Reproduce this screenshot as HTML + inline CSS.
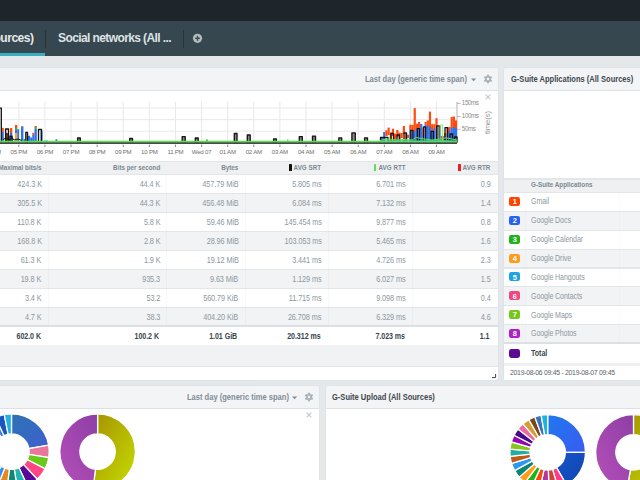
<!DOCTYPE html>
<html><head><meta charset="utf-8"><style>
html,body{margin:0;padding:0;width:640px;height:480px;overflow:hidden;background:#e5e8eb;font-family:"Liberation Sans", sans-serif;}
</style></head><body>
<div style="position:absolute;left:0px;top:0px;width:640px;height:21px;background:#1e252b;"></div><div style="position:absolute;left:0px;top:21px;width:640px;height:34.5px;background:#37474f;"></div><div style="position:absolute;left:0px;top:53px;width:45.3px;height:2.6px;background:#3cacbf;"></div><div style="position:absolute;left:45px;top:30px;width:1px;height:18px;background:#26323a;"></div><div style="position:absolute;left:183px;top:30px;width:1px;height:18px;background:#28343b;"></div><div style="position:absolute;top:31.44px;height:15.6px;line-height:15.6px;font-size:12px;font-weight:700;color:#e6eaec;white-space:nowrap;letter-spacing:-0.45px;right:606.4px;">ources)</div><div style="position:absolute;top:31.44px;height:15.6px;line-height:15.6px;font-size:12px;font-weight:700;color:#dde2e5;white-space:nowrap;letter-spacing:-0.6px;left:58px;">Social networks (All ...</div><svg style="position:absolute;left:192px;top:33px" width="11" height="11" viewBox="0 0 11 11"><circle cx="5.5" cy="5.3" r="4.6" fill="#b3bbbf"/><rect x="3" y="4.65" width="5" height="1.3" fill="#37474f"/><rect x="4.85" y="2.8" width="1.3" height="5" fill="#37474f"/></svg><div style="position:absolute;left:-10px;top:67.5px;width:508px;height:312px;background:#fff;border-radius:3px;box-shadow:0 0 0 0.7px #dde2e6;overflow:hidden"></div><div style="position:absolute;left:504px;top:67.5px;width:150px;height:312px;background:#fff;border-radius:3px;box-shadow:0 0 0 0.7px #dde2e6;overflow:hidden"></div><div style="position:absolute;left:-10px;top:385.6px;width:329px;height:120px;background:#fff;border-radius:3px;box-shadow:0 0 0 0.7px #dde2e6;overflow:hidden"></div><div style="position:absolute;left:326px;top:385.6px;width:330px;height:120px;background:#fff;border-radius:3px;box-shadow:0 0 0 0.7px #dde2e6;overflow:hidden"></div><div style="position:absolute;left:-10px;top:67.5px;width:508px;height:23.6px;background:#f3f4f6;border-radius:3px 3px 0 0;border-bottom:1px solid #dce1e5;box-sizing:border-box"></div><div style="position:absolute;left:504px;top:67.5px;width:150px;height:23.6px;background:#f3f4f6;border-radius:3px 3px 0 0;border-bottom:1px solid #dce1e5;box-sizing:border-box"></div><div style="position:absolute;left:-10px;top:385.6px;width:329px;height:23.3px;background:#f3f4f6;border-radius:3px 3px 0 0;border-bottom:1px solid #dce1e5;box-sizing:border-box"></div><div style="position:absolute;left:326px;top:385.6px;width:330px;height:23.3px;background:#f3f4f6;border-radius:3px 3px 0 0;border-bottom:1px solid #dce1e5;box-sizing:border-box"></div><div style="position:absolute;top:73.93px;height:11.31px;line-height:11.31px;font-size:8.7px;font-weight:700;color:#7f8d96;white-space:nowrap;letter-spacing:0px;left:365.3px;transform:scaleX(0.869);transform-origin:left center;">Last day (generic time span)</div><svg style="position:absolute;left:470.5px;top:77.7px" width="6" height="4" viewBox="0 0 6 4"><path d="M0 0.5 L5.2 0.5 L2.6 3.3 Z" fill="#7f8d96"/></svg><svg style="position:absolute;left:482px;top:73.2px" width="12" height="12" viewBox="-6 -6 12 12"><rect x="-1.05" y="-4.3" width="2.1" height="2.2" fill="#aab3b9" transform="rotate(0)"/><rect x="-1.05" y="-4.3" width="2.1" height="2.2" fill="#aab3b9" transform="rotate(60)"/><rect x="-1.05" y="-4.3" width="2.1" height="2.2" fill="#aab3b9" transform="rotate(120)"/><rect x="-1.05" y="-4.3" width="2.1" height="2.2" fill="#aab3b9" transform="rotate(180)"/><rect x="-1.05" y="-4.3" width="2.1" height="2.2" fill="#aab3b9" transform="rotate(240)"/><rect x="-1.05" y="-4.3" width="2.1" height="2.2" fill="#aab3b9" transform="rotate(300)"/><circle cx="0" cy="0" r="3.1" fill="#aab3b9"/><circle cx="0" cy="0" r="1.25" fill="#f3f4f6"/></svg><div style="position:absolute;top:73.83px;height:11.96px;line-height:11.96px;font-size:9.2px;font-weight:700;color:#40474d;white-space:nowrap;letter-spacing:0px;left:511.1px;transform:scaleX(0.819);transform-origin:left center;">G-Suite Applications (All Sources)</div><div style="position:absolute;top:392.33px;height:11.31px;line-height:11.31px;font-size:8.7px;font-weight:700;color:#7f8d96;white-space:nowrap;letter-spacing:0px;left:187.0px;transform:scaleX(0.869);transform-origin:left center;">Last day (generic time span)</div><svg style="position:absolute;left:291.5px;top:396px" width="6" height="4" viewBox="0 0 6 4"><path d="M0 0.5 L5.2 0.5 L2.6 3.3 Z" fill="#7f8d96"/></svg><svg style="position:absolute;left:303px;top:391.3px" width="12" height="12" viewBox="-6 -6 12 12"><rect x="-1.05" y="-4.3" width="2.1" height="2.2" fill="#aab3b9" transform="rotate(0)"/><rect x="-1.05" y="-4.3" width="2.1" height="2.2" fill="#aab3b9" transform="rotate(60)"/><rect x="-1.05" y="-4.3" width="2.1" height="2.2" fill="#aab3b9" transform="rotate(120)"/><rect x="-1.05" y="-4.3" width="2.1" height="2.2" fill="#aab3b9" transform="rotate(180)"/><rect x="-1.05" y="-4.3" width="2.1" height="2.2" fill="#aab3b9" transform="rotate(240)"/><rect x="-1.05" y="-4.3" width="2.1" height="2.2" fill="#aab3b9" transform="rotate(300)"/><circle cx="0" cy="0" r="3.1" fill="#aab3b9"/><circle cx="0" cy="0" r="1.25" fill="#f3f4f6"/></svg><svg style="position:absolute;left:305.4px;top:410.8px" width="8" height="8" viewBox="0 0 8 8"><path d="M1.6 1.6 L6.4 6.4 M6.4 1.6 L1.6 6.4" stroke="#c4cacf" stroke-width="1.2"/></svg><div style="position:absolute;top:392.13px;height:11.96px;line-height:11.96px;font-size:9.2px;font-weight:700;color:#40474d;white-space:nowrap;letter-spacing:0px;left:332.4px;transform:scaleX(0.819);transform-origin:left center;">G-Suite Upload (All Sources)</div><svg style="position:absolute;left:0;top:90px" width="498" height="71" viewBox="0 90 498 71"><line x1="18.80" y1="101.8" x2="18.80" y2="142.5" stroke="#e8e8e8" stroke-width="1"/><line x1="18.80" y1="144.6" x2="18.80" y2="147" stroke="#888" stroke-width="1"/><line x1="44.91" y1="101.8" x2="44.91" y2="142.5" stroke="#e8e8e8" stroke-width="1"/><line x1="44.91" y1="144.6" x2="44.91" y2="147" stroke="#888" stroke-width="1"/><line x1="71.02" y1="101.8" x2="71.02" y2="142.5" stroke="#e8e8e8" stroke-width="1"/><line x1="71.02" y1="144.6" x2="71.02" y2="147" stroke="#888" stroke-width="1"/><line x1="97.13" y1="101.8" x2="97.13" y2="142.5" stroke="#e8e8e8" stroke-width="1"/><line x1="97.13" y1="144.6" x2="97.13" y2="147" stroke="#888" stroke-width="1"/><line x1="123.24" y1="101.8" x2="123.24" y2="142.5" stroke="#e8e8e8" stroke-width="1"/><line x1="123.24" y1="144.6" x2="123.24" y2="147" stroke="#888" stroke-width="1"/><line x1="149.35" y1="101.8" x2="149.35" y2="142.5" stroke="#e8e8e8" stroke-width="1"/><line x1="149.35" y1="144.6" x2="149.35" y2="147" stroke="#888" stroke-width="1"/><line x1="175.46" y1="101.8" x2="175.46" y2="142.5" stroke="#e8e8e8" stroke-width="1"/><line x1="175.46" y1="144.6" x2="175.46" y2="147" stroke="#888" stroke-width="1"/><line x1="201.57" y1="101.8" x2="201.57" y2="142.5" stroke="#e8e8e8" stroke-width="1"/><line x1="201.57" y1="144.6" x2="201.57" y2="147" stroke="#888" stroke-width="1"/><line x1="227.68" y1="101.8" x2="227.68" y2="142.5" stroke="#e8e8e8" stroke-width="1"/><line x1="227.68" y1="144.6" x2="227.68" y2="147" stroke="#888" stroke-width="1"/><line x1="253.79" y1="101.8" x2="253.79" y2="142.5" stroke="#e8e8e8" stroke-width="1"/><line x1="253.79" y1="144.6" x2="253.79" y2="147" stroke="#888" stroke-width="1"/><line x1="279.90" y1="101.8" x2="279.90" y2="142.5" stroke="#e8e8e8" stroke-width="1"/><line x1="279.90" y1="144.6" x2="279.90" y2="147" stroke="#888" stroke-width="1"/><line x1="306.01" y1="101.8" x2="306.01" y2="142.5" stroke="#e8e8e8" stroke-width="1"/><line x1="306.01" y1="144.6" x2="306.01" y2="147" stroke="#888" stroke-width="1"/><line x1="332.12" y1="101.8" x2="332.12" y2="142.5" stroke="#e8e8e8" stroke-width="1"/><line x1="332.12" y1="144.6" x2="332.12" y2="147" stroke="#888" stroke-width="1"/><line x1="358.23" y1="101.8" x2="358.23" y2="142.5" stroke="#e8e8e8" stroke-width="1"/><line x1="358.23" y1="144.6" x2="358.23" y2="147" stroke="#888" stroke-width="1"/><line x1="384.34" y1="101.8" x2="384.34" y2="142.5" stroke="#e8e8e8" stroke-width="1"/><line x1="384.34" y1="144.6" x2="384.34" y2="147" stroke="#888" stroke-width="1"/><line x1="410.45" y1="101.8" x2="410.45" y2="142.5" stroke="#e8e8e8" stroke-width="1"/><line x1="410.45" y1="144.6" x2="410.45" y2="147" stroke="#888" stroke-width="1"/><line x1="436.56" y1="101.8" x2="436.56" y2="142.5" stroke="#e8e8e8" stroke-width="1"/><line x1="436.56" y1="144.6" x2="436.56" y2="147" stroke="#888" stroke-width="1"/><line x1="0" y1="108.0" x2="457" y2="108.0" stroke="#e9e9e9" stroke-width="1"/><line x1="0" y1="119.6" x2="457" y2="119.6" stroke="#e9e9e9" stroke-width="1"/><line x1="0" y1="131.2" x2="457" y2="131.2" stroke="#e9e9e9" stroke-width="1"/><line x1="457" y1="101.8" x2="457" y2="143" stroke="#b5b5b5" stroke-width="1"/><line x1="457" y1="103.4" x2="460.5" y2="103.4" stroke="#aaa" stroke-width="0.8"/><line x1="457" y1="116.5" x2="460.5" y2="116.5" stroke="#aaa" stroke-width="0.8"/><line x1="457" y1="129.3" x2="460.5" y2="129.3" stroke="#aaa" stroke-width="0.8"/><rect x="2.00" y="127.90" width="1.80" height="3.80" fill="#ff4b0d"/><rect x="2.00" y="131.70" width="1.80" height="9.30" fill="#2f72e9"/><rect x="6.00" y="133.00" width="2.30" height="8.00" fill="#80360f"/><rect x="10.00" y="128.00" width="2.30" height="5.00" fill="#ff4b0d"/><rect x="10.00" y="133.00" width="2.30" height="8.00" fill="#2f72e9"/><rect x="15.00" y="125.00" width="2.30" height="3.00" fill="#ff4b0d"/><rect x="15.00" y="128.00" width="2.30" height="2.00" fill="#3db43d"/><rect x="15.00" y="130.00" width="2.30" height="3.00" fill="#2f72e9"/><rect x="15.00" y="133.00" width="2.30" height="8.00" fill="#f7a12b"/><rect x="17.30" y="129.00" width="1.80" height="0.60" fill="#ff4b0d"/><rect x="17.30" y="129.60" width="1.80" height="11.40" fill="#2f72e9"/><rect x="21.00" y="126.00" width="2.40" height="0.60" fill="#ff4b0d"/><rect x="21.00" y="126.60" width="2.40" height="14.40" fill="#2f72e9"/><rect x="23.50" y="139.00" width="1.60" height="2.00" fill="#2f72e9"/><rect x="28.00" y="135.80" width="2.20" height="5.20" fill="#2f72e9"/><rect x="30.20" y="137.50" width="2.20" height="3.50" fill="#2f72e9"/><rect x="32.30" y="132.80" width="2.20" height="2.20" fill="#ff4b0d"/><rect x="32.30" y="135.00" width="2.20" height="6.00" fill="#2f72e9"/><rect x="34.50" y="126.00" width="2.30" height="1.00" fill="#ff4b0d"/><rect x="34.50" y="127.00" width="2.30" height="2.00" fill="#3db43d"/><rect x="34.50" y="129.00" width="2.30" height="12.00" fill="#2f72e9"/><rect x="40.50" y="130.50" width="2.00" height="1.50" fill="#3db43d"/><rect x="40.50" y="132.00" width="2.00" height="9.00" fill="#2f72e9"/><rect x="44.00" y="140.00" width="4.00" height="1.00" fill="#9cc8f0"/><rect x="55.50" y="139.30" width="1.80" height="1.70" fill="#2f72e9"/><rect x="206.00" y="139.50" width="1.80" height="1.50" fill="#3db43d"/><rect x="287.00" y="139.50" width="1.50" height="1.50" fill="#8ab4f0"/><rect x="381.00" y="138.00" width="2.20" height="3.00" fill="#2f72e9"/><rect x="383.18" y="132.00" width="2.20" height="9.00" fill="#2f72e9"/><rect x="385.35" y="130.30" width="2.20" height="5.70" fill="#ff4b0d"/><rect x="387.53" y="127.60" width="2.20" height="7.40" fill="#ff4b0d"/><rect x="389.70" y="132.50" width="2.20" height="8.50" fill="#ff4b0d"/><rect x="391.88" y="128.70" width="2.20" height="7.30" fill="#ff4b0d"/><rect x="394.06" y="133.60" width="2.20" height="7.40" fill="#ff4b0d"/><rect x="396.23" y="130.00" width="2.20" height="7.00" fill="#ff4b0d"/><rect x="398.41" y="132.50" width="2.20" height="8.50" fill="#ff4b0d"/><rect x="400.58" y="133.00" width="2.20" height="5.00" fill="#ff4b0d"/><rect x="402.76" y="126.00" width="2.20" height="8.00" fill="#ff4b0d"/><rect x="404.94" y="133.60" width="2.20" height="7.40" fill="#ff4b0d"/><rect x="407.11" y="134.70" width="2.20" height="3.30" fill="#ff4b0d"/><rect x="409.29" y="124.80" width="2.20" height="5.20" fill="#ff4b0d"/><rect x="409.29" y="130.00" width="2.20" height="11.00" fill="#2f72e9"/><rect x="411.46" y="124.80" width="2.20" height="8.20" fill="#ff4b0d"/><rect x="411.46" y="133.00" width="2.20" height="8.00" fill="#2f72e9"/><rect x="413.64" y="108.20" width="2.20" height="22.80" fill="#ff4b0d"/><rect x="413.64" y="131.00" width="2.20" height="10.00" fill="#2f72e9"/><rect x="415.82" y="123.70" width="2.20" height="4.30" fill="#ff4b0d"/><rect x="415.82" y="128.00" width="2.20" height="13.00" fill="#2f72e9"/><rect x="417.99" y="122.00" width="2.20" height="8.00" fill="#ff4b0d"/><rect x="417.99" y="130.00" width="2.20" height="11.00" fill="#2f72e9"/><rect x="420.17" y="124.00" width="2.20" height="17.00" fill="#2f72e9"/><rect x="422.34" y="128.00" width="2.20" height="7.00" fill="#ff4b0d"/><rect x="422.34" y="135.00" width="2.20" height="6.00" fill="#2f72e9"/><rect x="424.52" y="122.00" width="2.20" height="2.50" fill="#ff4b0d"/><rect x="424.52" y="124.50" width="2.20" height="16.50" fill="#2f72e9"/><rect x="426.70" y="120.40" width="2.20" height="5.60" fill="#ff4b0d"/><rect x="426.70" y="126.00" width="2.20" height="15.00" fill="#2f72e9"/><rect x="428.87" y="111.60" width="2.20" height="15.40" fill="#ff4b0d"/><rect x="428.87" y="127.00" width="2.20" height="14.00" fill="#2f72e9"/><rect x="431.05" y="124.20" width="2.20" height="7.80" fill="#ff4b0d"/><rect x="431.05" y="132.00" width="2.20" height="9.00" fill="#2f72e9"/><rect x="433.22" y="124.20" width="2.20" height="3.80" fill="#ff4b0d"/><rect x="433.22" y="128.00" width="2.20" height="13.00" fill="#2f72e9"/><rect x="435.40" y="118.20" width="2.20" height="12.80" fill="#ff4b0d"/><rect x="435.40" y="131.00" width="2.20" height="10.00" fill="#2f72e9"/><rect x="437.58" y="133.00" width="2.20" height="8.00" fill="#2f72e9"/><rect x="439.75" y="136.00" width="2.20" height="5.00" fill="#2f72e9"/><rect x="441.93" y="136.00" width="2.20" height="5.00" fill="#ff4b0d"/><rect x="444.10" y="133.00" width="2.20" height="4.00" fill="#ff4b0d"/><rect x="444.10" y="137.00" width="2.20" height="4.00" fill="#2f72e9"/><rect x="446.28" y="127.60" width="2.20" height="6.40" fill="#ff4b0d"/><rect x="446.28" y="134.00" width="2.20" height="7.00" fill="#2f72e9"/><rect x="448.46" y="127.00" width="2.20" height="4.00" fill="#ff4b0d"/><rect x="448.46" y="131.00" width="2.20" height="10.00" fill="#2f72e9"/><rect x="450.63" y="117.00" width="2.20" height="11.00" fill="#ff4b0d"/><rect x="450.63" y="128.00" width="2.20" height="13.00" fill="#2f72e9"/><rect x="452.81" y="116.50" width="2.20" height="10.50" fill="#ff4b0d"/><rect x="452.81" y="127.00" width="2.20" height="14.00" fill="#2f72e9"/><rect x="454.98" y="120.40" width="2.02" height="7.60" fill="#ff4b0d"/><rect x="454.98" y="128.00" width="2.02" height="13.00" fill="#2f72e9"/><path d="M5.60 142.5 V129.00 H8.50 V142.5" fill="none" stroke="#151515" stroke-width="1.35" stroke-linejoin="round"/><path d="M9.90 142.5 V136.20 H12.10 V142.5" fill="none" stroke="#151515" stroke-width="1.35" stroke-linejoin="round"/><path d="M25.80 142.5 V132.30 H27.50 V142.5" fill="none" stroke="#151515" stroke-width="1.35" stroke-linejoin="round"/><path d="M38.50 142.5 V129.50 H41.50 V142.5" fill="none" stroke="#151515" stroke-width="1.35" stroke-linejoin="round"/><path d="M77.60 142.5 V138.00 H80.30 V142.5" fill="#8a8a8a" stroke="#151515" stroke-width="1.35" stroke-linejoin="round"/><path d="M129.70 142.5 V138.50 H132.50 V142.5" fill="#8a8a8a" stroke="#151515" stroke-width="1.35" stroke-linejoin="round"/><path d="M182.20 142.5 V136.60 H185.20 V142.5" fill="#8a8a8a" stroke="#151515" stroke-width="1.35" stroke-linejoin="round"/><path d="M195.30 142.5 V138.00 H198.20 V142.5" fill="#8a8a8a" stroke="#151515" stroke-width="1.35" stroke-linejoin="round"/><path d="M234.30 142.5 V133.50 H237.00 V142.5" fill="#8a8a8a" stroke="#151515" stroke-width="1.35" stroke-linejoin="round"/><path d="M247.30 142.5 V135.00 H250.20 V142.5" fill="#8a8a8a" stroke="#151515" stroke-width="1.35" stroke-linejoin="round"/><path d="M273.60 142.5 V138.80 H276.30 V142.5" fill="#8a8a8a" stroke="#151515" stroke-width="1.35" stroke-linejoin="round"/><path d="M299.30 142.5 V136.60 H302.30 V142.5" fill="#8a8a8a" stroke="#151515" stroke-width="1.35" stroke-linejoin="round"/><path d="M312.50 142.5 V136.10 H315.50 V142.5" fill="#8a8a8a" stroke="#151515" stroke-width="1.35" stroke-linejoin="round"/><path d="M338.80 142.5 V137.90 H341.70 V142.5" fill="#8a8a8a" stroke="#151515" stroke-width="1.35" stroke-linejoin="round"/><path d="M351.90 142.5 V132.90 H355.30 V142.5" fill="#8a8a8a" stroke="#151515" stroke-width="1.35" stroke-linejoin="round"/><path d="M364.60 142.5 V137.90 H367.50 V142.5" fill="#8a8a8a" stroke="#151515" stroke-width="1.35" stroke-linejoin="round"/><path d="M1.3 142.5 V108.2 H-2" fill="none" stroke="#111" stroke-width="1.3"/><path d="M380.50 142.5 V137.50 H388.00 V142.5" fill="none" stroke="#151515" stroke-width="1.3" stroke-linejoin="round"/><path d="M391.00 142.5 V133.50 H393.50 V142.5" fill="none" stroke="#151515" stroke-width="1.3" stroke-linejoin="round"/><path d="M397.00 142.5 V135.00 H399.50 V142.5" fill="none" stroke="#151515" stroke-width="1.3" stroke-linejoin="round"/><path d="M404.00 142.5 V133.00 H406.50 V142.5" fill="none" stroke="#151515" stroke-width="1.3" stroke-linejoin="round"/><path d="M410.80 142.5 V130.30 H413.00 V142.5" fill="none" stroke="#151515" stroke-width="1.3" stroke-linejoin="round"/><path d="M417.40 142.5 V128.70 H419.60 V142.5" fill="none" stroke="#151515" stroke-width="1.3" stroke-linejoin="round"/><path d="M423.50 142.5 V127.00 H425.70 V142.5" fill="none" stroke="#151515" stroke-width="1.3" stroke-linejoin="round"/><path d="M431.00 142.5 V131.40 H433.40 V142.5" fill="none" stroke="#151515" stroke-width="1.3" stroke-linejoin="round"/><path d="M436.70 142.5 V125.90 H440.00 V142.5" fill="#8a8a8a" stroke="#151515" stroke-width="1.3" stroke-linejoin="round"/><path d="M445.00 142.5 V127.60 H447.70 V142.5" fill="none" stroke="#151515" stroke-width="1.3" stroke-linejoin="round"/><path d="M450.00 142.5 V134.00 H452.50 V142.5" fill="none" stroke="#151515" stroke-width="1.3" stroke-linejoin="round"/><path d="M454.50 142.5 V137.00 H457.00 V142.5" fill="none" stroke="#151515" stroke-width="1.3" stroke-linejoin="round"/><path d="M3 139.5 L6 138 L9 140 L12 137.5 L14 140 L18 139 L22 140.5" fill="none" stroke="#111" stroke-width="1"/><path d="M440.2 141 V125 H442.6 V141" fill="none" stroke="#7ef07e" stroke-width="1"/><path d="M380 140.5 L388 139 L396 140 L404 139.5 L412 140 L416 137.5 L424 139 L432 140 L440 139 L446 137.8 L452 139 L457 140" fill="none" stroke="#5ee05e" stroke-width="1"/><path d="M384 141 L400 140.5 L420 141 L440 140.5 L457 141" fill="none" stroke="#35c9c9" stroke-width="0.8"/><rect x="0" y="142.2" width="457" height="1.7" fill="#2e3a30"/><rect x="0" y="140.75" width="457" height="1.5" fill="#55e04a"/></svg><div style="position:absolute;top:147.62px;height:7.93px;line-height:7.93px;font-size:6.1px;font-weight:400;color:#6f6f6f;white-space:nowrap;letter-spacing:-0.22px;left:-107.31px;width:200px;text-align:center;">04 PM</div><div style="position:absolute;top:147.62px;height:7.93px;line-height:7.93px;font-size:6.1px;font-weight:400;color:#6f6f6f;white-space:nowrap;letter-spacing:-0.22px;left:-81.2px;width:200px;text-align:center;">05 PM</div><div style="position:absolute;top:147.62px;height:7.93px;line-height:7.93px;font-size:6.1px;font-weight:400;color:#6f6f6f;white-space:nowrap;letter-spacing:-0.22px;left:-55.09px;width:200px;text-align:center;">06 PM</div><div style="position:absolute;top:147.62px;height:7.93px;line-height:7.93px;font-size:6.1px;font-weight:400;color:#6f6f6f;white-space:nowrap;letter-spacing:-0.22px;left:-28.980000000000004px;width:200px;text-align:center;">07 PM</div><div style="position:absolute;top:147.62px;height:7.93px;line-height:7.93px;font-size:6.1px;font-weight:400;color:#6f6f6f;white-space:nowrap;letter-spacing:-0.22px;left:-2.8700000000000045px;width:200px;text-align:center;">08 PM</div><div style="position:absolute;top:147.62px;height:7.93px;line-height:7.93px;font-size:6.1px;font-weight:400;color:#6f6f6f;white-space:nowrap;letter-spacing:-0.22px;left:23.239999999999995px;width:200px;text-align:center;">09 PM</div><div style="position:absolute;top:147.62px;height:7.93px;line-height:7.93px;font-size:6.1px;font-weight:400;color:#6f6f6f;white-space:nowrap;letter-spacing:-0.22px;left:49.35000000000002px;width:200px;text-align:center;">10 PM</div><div style="position:absolute;top:147.62px;height:7.93px;line-height:7.93px;font-size:6.1px;font-weight:400;color:#6f6f6f;white-space:nowrap;letter-spacing:-0.22px;left:75.46000000000001px;width:200px;text-align:center;">11 PM</div><div style="position:absolute;top:147.62px;height:7.93px;line-height:7.93px;font-size:6.1px;font-weight:400;color:#6f6f6f;white-space:nowrap;letter-spacing:-0.22px;left:101.57px;width:200px;text-align:center;">Wed 07</div><div style="position:absolute;top:147.62px;height:7.93px;line-height:7.93px;font-size:6.1px;font-weight:400;color:#6f6f6f;white-space:nowrap;letter-spacing:-0.22px;left:127.68px;width:200px;text-align:center;">01 AM</div><div style="position:absolute;top:147.62px;height:7.93px;line-height:7.93px;font-size:6.1px;font-weight:400;color:#6f6f6f;white-space:nowrap;letter-spacing:-0.22px;left:153.79000000000002px;width:200px;text-align:center;">02 AM</div><div style="position:absolute;top:147.62px;height:7.93px;line-height:7.93px;font-size:6.1px;font-weight:400;color:#6f6f6f;white-space:nowrap;letter-spacing:-0.22px;left:179.90000000000003px;width:200px;text-align:center;">03 AM</div><div style="position:absolute;top:147.62px;height:7.93px;line-height:7.93px;font-size:6.1px;font-weight:400;color:#6f6f6f;white-space:nowrap;letter-spacing:-0.22px;left:206.01px;width:200px;text-align:center;">04 AM</div><div style="position:absolute;top:147.62px;height:7.93px;line-height:7.93px;font-size:6.1px;font-weight:400;color:#6f6f6f;white-space:nowrap;letter-spacing:-0.22px;left:232.12px;width:200px;text-align:center;">05 AM</div><div style="position:absolute;top:147.62px;height:7.93px;line-height:7.93px;font-size:6.1px;font-weight:400;color:#6f6f6f;white-space:nowrap;letter-spacing:-0.22px;left:258.23px;width:200px;text-align:center;">06 AM</div><div style="position:absolute;top:147.62px;height:7.93px;line-height:7.93px;font-size:6.1px;font-weight:400;color:#6f6f6f;white-space:nowrap;letter-spacing:-0.22px;left:284.34px;width:200px;text-align:center;">07 AM</div><div style="position:absolute;top:147.62px;height:7.93px;line-height:7.93px;font-size:6.1px;font-weight:400;color:#6f6f6f;white-space:nowrap;letter-spacing:-0.22px;left:310.45px;width:200px;text-align:center;">08 AM</div><div style="position:absolute;top:147.62px;height:7.93px;line-height:7.93px;font-size:6.1px;font-weight:400;color:#6f6f6f;white-space:nowrap;letter-spacing:-0.22px;left:336.56px;width:200px;text-align:center;">09 AM</div><div style="position:absolute;top:99.12px;height:8.19px;line-height:8.19px;font-size:6.3px;font-weight:400;color:#8c8c8c;white-space:nowrap;letter-spacing:-0.42px;left:461.8px;">150ms</div><div style="position:absolute;top:112.22px;height:8.19px;line-height:8.19px;font-size:6.3px;font-weight:400;color:#8c8c8c;white-space:nowrap;letter-spacing:-0.42px;left:461.8px;">100ms</div><div style="position:absolute;top:125.02px;height:8.19px;line-height:8.19px;font-size:6.3px;font-weight:400;color:#8c8c8c;white-space:nowrap;letter-spacing:-0.42px;left:461.8px;">50ms</div><div style="position:absolute;left:467px;top:117.5px;width:40px;height:9px;line-height:9px;text-align:center;font-size:7.8px;color:#999;transform:rotate(-90deg);letter-spacing:-0.1px">time(s)</div><svg style="position:absolute;left:483.8px;top:92.8px" width="8" height="8" viewBox="0 0 8 8"><path d="M1.6 1.6 L6.4 6.4 M6.4 1.6 L1.6 6.4" stroke="#c4cacf" stroke-width="1.2"/></svg><div style="position:absolute;left:-10px;top:161.0px;width:508px;height:13.5px;background:#eef0f2;border-top:1px solid #e2e6e9;box-sizing:border-box"></div><div style="position:absolute;left:-10px;top:173.8px;width:508px;height:19.0px;background:#ffffff;"></div><div style="position:absolute;left:-10px;top:173.8px;width:508px;height:1.2px;background:#e2e6e9;"></div><div style="position:absolute;top:178.83px;height:11.18px;line-height:11.18px;font-size:8.6px;font-weight:400;color:#8d989f;white-space:nowrap;letter-spacing:-0.1px;right:598.5px;transform:scaleX(0.85);transform-origin:right center;">424.3 K</div><div style="position:absolute;top:178.83px;height:11.18px;line-height:11.18px;font-size:8.6px;font-weight:400;color:#8d989f;white-space:nowrap;letter-spacing:-0.1px;right:479.6px;transform:scaleX(0.85);transform-origin:right center;">44.4 K</div><div style="position:absolute;top:178.83px;height:11.18px;line-height:11.18px;font-size:8.6px;font-weight:400;color:#8d989f;white-space:nowrap;letter-spacing:-0.1px;right:401.5px;transform:scaleX(0.85);transform-origin:right center;">457.79 MiB</div><div style="position:absolute;top:178.83px;height:11.18px;line-height:11.18px;font-size:8.6px;font-weight:400;color:#8d989f;white-space:nowrap;letter-spacing:-0.1px;right:318.3px;transform:scaleX(0.85);transform-origin:right center;">5.805 ms</div><div style="position:absolute;top:178.83px;height:11.18px;line-height:11.18px;font-size:8.6px;font-weight:400;color:#8d989f;white-space:nowrap;letter-spacing:-0.1px;right:234.3px;transform:scaleX(0.85);transform-origin:right center;">6.701 ms</div><div style="position:absolute;top:178.83px;height:11.18px;line-height:11.18px;font-size:8.6px;font-weight:400;color:#8d989f;white-space:nowrap;letter-spacing:-0.1px;right:149.7px;transform:scaleX(0.85);transform-origin:right center;">0.9</div><div style="position:absolute;left:-10px;top:192.8px;width:508px;height:19.0px;background:#f2f3f5;"></div><div style="position:absolute;left:-10px;top:192.8px;width:508px;height:1.2px;background:#e2e6e9;"></div><div style="position:absolute;top:197.83px;height:11.18px;line-height:11.18px;font-size:8.6px;font-weight:400;color:#8d989f;white-space:nowrap;letter-spacing:-0.1px;right:598.5px;transform:scaleX(0.85);transform-origin:right center;">305.5 K</div><div style="position:absolute;top:197.83px;height:11.18px;line-height:11.18px;font-size:8.6px;font-weight:400;color:#8d989f;white-space:nowrap;letter-spacing:-0.1px;right:479.6px;transform:scaleX(0.85);transform-origin:right center;">44.3 K</div><div style="position:absolute;top:197.83px;height:11.18px;line-height:11.18px;font-size:8.6px;font-weight:400;color:#8d989f;white-space:nowrap;letter-spacing:-0.1px;right:401.5px;transform:scaleX(0.85);transform-origin:right center;">456.48 MiB</div><div style="position:absolute;top:197.83px;height:11.18px;line-height:11.18px;font-size:8.6px;font-weight:400;color:#8d989f;white-space:nowrap;letter-spacing:-0.1px;right:318.3px;transform:scaleX(0.85);transform-origin:right center;">6.084 ms</div><div style="position:absolute;top:197.83px;height:11.18px;line-height:11.18px;font-size:8.6px;font-weight:400;color:#8d989f;white-space:nowrap;letter-spacing:-0.1px;right:234.3px;transform:scaleX(0.85);transform-origin:right center;">7.132 ms</div><div style="position:absolute;top:197.83px;height:11.18px;line-height:11.18px;font-size:8.6px;font-weight:400;color:#8d989f;white-space:nowrap;letter-spacing:-0.1px;right:149.7px;transform:scaleX(0.85);transform-origin:right center;">1.4</div><div style="position:absolute;left:-10px;top:211.8px;width:508px;height:19.0px;background:#ffffff;"></div><div style="position:absolute;left:-10px;top:211.8px;width:508px;height:1.2px;background:#e2e6e9;"></div><div style="position:absolute;top:216.83px;height:11.18px;line-height:11.18px;font-size:8.6px;font-weight:400;color:#8d989f;white-space:nowrap;letter-spacing:-0.1px;right:598.5px;transform:scaleX(0.85);transform-origin:right center;">110.8 K</div><div style="position:absolute;top:216.83px;height:11.18px;line-height:11.18px;font-size:8.6px;font-weight:400;color:#8d989f;white-space:nowrap;letter-spacing:-0.1px;right:479.6px;transform:scaleX(0.85);transform-origin:right center;">5.8 K</div><div style="position:absolute;top:216.83px;height:11.18px;line-height:11.18px;font-size:8.6px;font-weight:400;color:#8d989f;white-space:nowrap;letter-spacing:-0.1px;right:401.5px;transform:scaleX(0.85);transform-origin:right center;">59.46 MiB</div><div style="position:absolute;top:216.83px;height:11.18px;line-height:11.18px;font-size:8.6px;font-weight:400;color:#8d989f;white-space:nowrap;letter-spacing:-0.1px;right:318.3px;transform:scaleX(0.85);transform-origin:right center;">145.454 ms</div><div style="position:absolute;top:216.83px;height:11.18px;line-height:11.18px;font-size:8.6px;font-weight:400;color:#8d989f;white-space:nowrap;letter-spacing:-0.1px;right:234.3px;transform:scaleX(0.85);transform-origin:right center;">9.877 ms</div><div style="position:absolute;top:216.83px;height:11.18px;line-height:11.18px;font-size:8.6px;font-weight:400;color:#8d989f;white-space:nowrap;letter-spacing:-0.1px;right:149.7px;transform:scaleX(0.85);transform-origin:right center;">0.8</div><div style="position:absolute;left:-10px;top:230.8px;width:508px;height:19.0px;background:#f2f3f5;"></div><div style="position:absolute;left:-10px;top:230.8px;width:508px;height:1.2px;background:#e2e6e9;"></div><div style="position:absolute;top:235.83px;height:11.18px;line-height:11.18px;font-size:8.6px;font-weight:400;color:#8d989f;white-space:nowrap;letter-spacing:-0.1px;right:598.5px;transform:scaleX(0.85);transform-origin:right center;">168.8 K</div><div style="position:absolute;top:235.83px;height:11.18px;line-height:11.18px;font-size:8.6px;font-weight:400;color:#8d989f;white-space:nowrap;letter-spacing:-0.1px;right:479.6px;transform:scaleX(0.85);transform-origin:right center;">2.8 K</div><div style="position:absolute;top:235.83px;height:11.18px;line-height:11.18px;font-size:8.6px;font-weight:400;color:#8d989f;white-space:nowrap;letter-spacing:-0.1px;right:401.5px;transform:scaleX(0.85);transform-origin:right center;">28.96 MiB</div><div style="position:absolute;top:235.83px;height:11.18px;line-height:11.18px;font-size:8.6px;font-weight:400;color:#8d989f;white-space:nowrap;letter-spacing:-0.1px;right:318.3px;transform:scaleX(0.85);transform-origin:right center;">103.053 ms</div><div style="position:absolute;top:235.83px;height:11.18px;line-height:11.18px;font-size:8.6px;font-weight:400;color:#8d989f;white-space:nowrap;letter-spacing:-0.1px;right:234.3px;transform:scaleX(0.85);transform-origin:right center;">5.465 ms</div><div style="position:absolute;top:235.83px;height:11.18px;line-height:11.18px;font-size:8.6px;font-weight:400;color:#8d989f;white-space:nowrap;letter-spacing:-0.1px;right:149.7px;transform:scaleX(0.85);transform-origin:right center;">1.6</div><div style="position:absolute;left:-10px;top:249.8px;width:508px;height:19.0px;background:#ffffff;"></div><div style="position:absolute;left:-10px;top:249.8px;width:508px;height:1.2px;background:#e2e6e9;"></div><div style="position:absolute;top:254.83px;height:11.18px;line-height:11.18px;font-size:8.6px;font-weight:400;color:#8d989f;white-space:nowrap;letter-spacing:-0.1px;right:598.5px;transform:scaleX(0.85);transform-origin:right center;">61.3 K</div><div style="position:absolute;top:254.83px;height:11.18px;line-height:11.18px;font-size:8.6px;font-weight:400;color:#8d989f;white-space:nowrap;letter-spacing:-0.1px;right:479.6px;transform:scaleX(0.85);transform-origin:right center;">1.9 K</div><div style="position:absolute;top:254.83px;height:11.18px;line-height:11.18px;font-size:8.6px;font-weight:400;color:#8d989f;white-space:nowrap;letter-spacing:-0.1px;right:401.5px;transform:scaleX(0.85);transform-origin:right center;">19.12 MiB</div><div style="position:absolute;top:254.83px;height:11.18px;line-height:11.18px;font-size:8.6px;font-weight:400;color:#8d989f;white-space:nowrap;letter-spacing:-0.1px;right:318.3px;transform:scaleX(0.85);transform-origin:right center;">3.441 ms</div><div style="position:absolute;top:254.83px;height:11.18px;line-height:11.18px;font-size:8.6px;font-weight:400;color:#8d989f;white-space:nowrap;letter-spacing:-0.1px;right:234.3px;transform:scaleX(0.85);transform-origin:right center;">4.726 ms</div><div style="position:absolute;top:254.83px;height:11.18px;line-height:11.18px;font-size:8.6px;font-weight:400;color:#8d989f;white-space:nowrap;letter-spacing:-0.1px;right:149.7px;transform:scaleX(0.85);transform-origin:right center;">2.3</div><div style="position:absolute;left:-10px;top:268.8px;width:508px;height:19.0px;background:#f2f3f5;"></div><div style="position:absolute;left:-10px;top:268.8px;width:508px;height:1.2px;background:#e2e6e9;"></div><div style="position:absolute;top:273.83px;height:11.18px;line-height:11.18px;font-size:8.6px;font-weight:400;color:#8d989f;white-space:nowrap;letter-spacing:-0.1px;right:598.5px;transform:scaleX(0.85);transform-origin:right center;">19.8 K</div><div style="position:absolute;top:273.83px;height:11.18px;line-height:11.18px;font-size:8.6px;font-weight:400;color:#8d989f;white-space:nowrap;letter-spacing:-0.1px;right:479.6px;transform:scaleX(0.85);transform-origin:right center;">935.3</div><div style="position:absolute;top:273.83px;height:11.18px;line-height:11.18px;font-size:8.6px;font-weight:400;color:#8d989f;white-space:nowrap;letter-spacing:-0.1px;right:401.5px;transform:scaleX(0.85);transform-origin:right center;">9.63 MiB</div><div style="position:absolute;top:273.83px;height:11.18px;line-height:11.18px;font-size:8.6px;font-weight:400;color:#8d989f;white-space:nowrap;letter-spacing:-0.1px;right:318.3px;transform:scaleX(0.85);transform-origin:right center;">1.129 ms</div><div style="position:absolute;top:273.83px;height:11.18px;line-height:11.18px;font-size:8.6px;font-weight:400;color:#8d989f;white-space:nowrap;letter-spacing:-0.1px;right:234.3px;transform:scaleX(0.85);transform-origin:right center;">6.027 ms</div><div style="position:absolute;top:273.83px;height:11.18px;line-height:11.18px;font-size:8.6px;font-weight:400;color:#8d989f;white-space:nowrap;letter-spacing:-0.1px;right:149.7px;transform:scaleX(0.85);transform-origin:right center;">1.5</div><div style="position:absolute;left:-10px;top:287.8px;width:508px;height:19.0px;background:#ffffff;"></div><div style="position:absolute;left:-10px;top:287.8px;width:508px;height:1.2px;background:#e2e6e9;"></div><div style="position:absolute;top:292.83px;height:11.18px;line-height:11.18px;font-size:8.6px;font-weight:400;color:#8d989f;white-space:nowrap;letter-spacing:-0.1px;right:598.5px;transform:scaleX(0.85);transform-origin:right center;">3.4 K</div><div style="position:absolute;top:292.83px;height:11.18px;line-height:11.18px;font-size:8.6px;font-weight:400;color:#8d989f;white-space:nowrap;letter-spacing:-0.1px;right:479.6px;transform:scaleX(0.85);transform-origin:right center;">53.2</div><div style="position:absolute;top:292.83px;height:11.18px;line-height:11.18px;font-size:8.6px;font-weight:400;color:#8d989f;white-space:nowrap;letter-spacing:-0.1px;right:401.5px;transform:scaleX(0.85);transform-origin:right center;">560.79 KiB</div><div style="position:absolute;top:292.83px;height:11.18px;line-height:11.18px;font-size:8.6px;font-weight:400;color:#8d989f;white-space:nowrap;letter-spacing:-0.1px;right:318.3px;transform:scaleX(0.85);transform-origin:right center;">11.715 ms</div><div style="position:absolute;top:292.83px;height:11.18px;line-height:11.18px;font-size:8.6px;font-weight:400;color:#8d989f;white-space:nowrap;letter-spacing:-0.1px;right:234.3px;transform:scaleX(0.85);transform-origin:right center;">9.098 ms</div><div style="position:absolute;top:292.83px;height:11.18px;line-height:11.18px;font-size:8.6px;font-weight:400;color:#8d989f;white-space:nowrap;letter-spacing:-0.1px;right:149.7px;transform:scaleX(0.85);transform-origin:right center;">0.4</div><div style="position:absolute;left:-10px;top:306.8px;width:508px;height:19.0px;background:#f2f3f5;"></div><div style="position:absolute;left:-10px;top:306.8px;width:508px;height:1.2px;background:#e2e6e9;"></div><div style="position:absolute;top:311.83px;height:11.18px;line-height:11.18px;font-size:8.6px;font-weight:400;color:#8d989f;white-space:nowrap;letter-spacing:-0.1px;right:598.5px;transform:scaleX(0.85);transform-origin:right center;">4.7 K</div><div style="position:absolute;top:311.83px;height:11.18px;line-height:11.18px;font-size:8.6px;font-weight:400;color:#8d989f;white-space:nowrap;letter-spacing:-0.1px;right:479.6px;transform:scaleX(0.85);transform-origin:right center;">38.3</div><div style="position:absolute;top:311.83px;height:11.18px;line-height:11.18px;font-size:8.6px;font-weight:400;color:#8d989f;white-space:nowrap;letter-spacing:-0.1px;right:401.5px;transform:scaleX(0.85);transform-origin:right center;">404.20 KiB</div><div style="position:absolute;top:311.83px;height:11.18px;line-height:11.18px;font-size:8.6px;font-weight:400;color:#8d989f;white-space:nowrap;letter-spacing:-0.1px;right:318.3px;transform:scaleX(0.85);transform-origin:right center;">26.708 ms</div><div style="position:absolute;top:311.83px;height:11.18px;line-height:11.18px;font-size:8.6px;font-weight:400;color:#8d989f;white-space:nowrap;letter-spacing:-0.1px;right:234.3px;transform:scaleX(0.85);transform-origin:right center;">6.329 ms</div><div style="position:absolute;top:311.83px;height:11.18px;line-height:11.18px;font-size:8.6px;font-weight:400;color:#8d989f;white-space:nowrap;letter-spacing:-0.1px;right:149.7px;transform:scaleX(0.85);transform-origin:right center;">4.6</div><div style="position:absolute;left:47.5px;top:174.5px;width:1px;height:152.0px;background:rgba(0,0,0,0.025);"></div><div style="position:absolute;left:166.4px;top:174.5px;width:1px;height:152.0px;background:rgba(0,0,0,0.025);"></div><div style="position:absolute;left:244.5px;top:174.5px;width:1px;height:152.0px;background:rgba(0,0,0,0.025);"></div><div style="position:absolute;left:327.7px;top:174.5px;width:1px;height:152.0px;background:rgba(0,0,0,0.025);"></div><div style="position:absolute;left:411.7px;top:174.5px;width:1px;height:152.0px;background:rgba(0,0,0,0.025);"></div><div style="position:absolute;left:-10px;top:325.4px;width:508px;height:2px;background:#dbe0e4;"></div><div style="position:absolute;left:-10px;top:327.4px;width:508px;height:17.6px;background:#ffffff;"></div><div style="position:absolute;top:331.03px;height:10.92px;line-height:10.92px;font-size:8.4px;font-weight:700;color:#37464e;white-space:nowrap;letter-spacing:-0.05px;right:599.5px;transform:scaleX(0.845);transform-origin:right center;">602.0 K</div><div style="position:absolute;top:331.03px;height:10.92px;line-height:10.92px;font-size:8.4px;font-weight:700;color:#37464e;white-space:nowrap;letter-spacing:-0.05px;right:480.6px;transform:scaleX(0.845);transform-origin:right center;">100.2 K</div><div style="position:absolute;top:331.03px;height:10.92px;line-height:10.92px;font-size:8.4px;font-weight:700;color:#37464e;white-space:nowrap;letter-spacing:-0.05px;right:402.5px;transform:scaleX(0.845);transform-origin:right center;">1.01 GiB</div><div style="position:absolute;top:331.03px;height:10.92px;line-height:10.92px;font-size:8.4px;font-weight:700;color:#37464e;white-space:nowrap;letter-spacing:-0.05px;right:319.3px;transform:scaleX(0.845);transform-origin:right center;">20.312 ms</div><div style="position:absolute;top:331.03px;height:10.92px;line-height:10.92px;font-size:8.4px;font-weight:700;color:#37464e;white-space:nowrap;letter-spacing:-0.05px;right:235.3px;transform:scaleX(0.845);transform-origin:right center;">7.023 ms</div><div style="position:absolute;top:331.03px;height:10.92px;line-height:10.92px;font-size:8.4px;font-weight:700;color:#37464e;white-space:nowrap;letter-spacing:-0.05px;right:150.7px;transform:scaleX(0.845);transform-origin:right center;">1.1</div><div style="position:absolute;left:-10px;top:345px;width:508px;height:21.3px;background:#f0f2f4;"></div><div style="position:absolute;left:-10px;top:366px;width:508px;height:1px;background:#e3e6e9;"></div><svg style="position:absolute;left:491.4px;top:373.3px" width="6" height="6" viewBox="0 0 6 6"><path d="M1 4.6 H4.6 V1" fill="none" stroke="#444" stroke-width="1"/></svg><div style="position:absolute;top:163.52px;height:9.23px;line-height:9.23px;font-size:7.1px;font-weight:700;color:#7b8890;white-space:nowrap;letter-spacing:0px;right:598.7px;transform:scaleX(0.885);transform-origin:right center;">Maximal bits/s</div><div style="position:absolute;top:163.52px;height:9.23px;line-height:9.23px;font-size:7.1px;font-weight:700;color:#7b8890;white-space:nowrap;letter-spacing:0px;right:479.79999999999995px;transform:scaleX(0.885);transform-origin:right center;">Bits per second</div><div style="position:absolute;top:163.52px;height:9.23px;line-height:9.23px;font-size:7.1px;font-weight:700;color:#7b8890;white-space:nowrap;letter-spacing:0px;right:401.7px;transform:scaleX(0.885);transform-origin:right center;">Bytes</div><div style="position:absolute;top:163.52px;height:9.23px;line-height:9.23px;font-size:7.1px;font-weight:700;color:#7b8890;white-space:nowrap;letter-spacing:0px;right:318.5px;transform:scaleX(0.885);transform-origin:right center;">AVG SRT</div><div style="position:absolute;top:163.52px;height:9.23px;line-height:9.23px;font-size:7.1px;font-weight:700;color:#7b8890;white-space:nowrap;letter-spacing:0px;right:234.5px;transform:scaleX(0.885);transform-origin:right center;">AVG RTT</div><div style="position:absolute;top:163.52px;height:9.23px;line-height:9.23px;font-size:7.1px;font-weight:700;color:#7b8890;white-space:nowrap;letter-spacing:0px;right:149.89999999999998px;transform:scaleX(0.885);transform-origin:right center;">AVG RTR</div><div style="position:absolute;left:289.2px;top:164px;width:2.6px;height:6.6px;background:#111;border-radius:0.6px"></div><div style="position:absolute;left:373.5px;top:164px;width:2.5px;height:6.6px;background:#5ce05c;border-radius:0.6px"></div><div style="position:absolute;left:458.2px;top:164px;width:2.6px;height:6.6px;background:#ee1c24;border-radius:0.6px"></div><div style="position:absolute;left:504px;top:178px;width:150px;height:2px;background:#e4e7ea;"></div><div style="position:absolute;left:504px;top:180px;width:150px;height:12px;background:#eef0f2;"></div><div style="position:absolute;top:181.22px;height:9.23px;line-height:9.23px;font-size:7.1px;font-weight:700;color:#7b8890;white-space:nowrap;letter-spacing:0px;left:531.2px;transform:scaleX(0.885);transform-origin:left center;">G-Suite Applications</div><div style="position:absolute;left:504px;top:191.8px;width:150px;height:18.9px;background:#ffffff;"></div><div style="position:absolute;left:504px;top:191.8px;width:150px;height:1.2px;background:#e2e6e9;"></div><div style="position:absolute;left:509.3px;top:196.8px;width:10.8px;height:9px;background:#ff4400;border-radius:2.2px"></div><div style="position:absolute;top:197.03px;height:9.62px;line-height:9.62px;font-size:7.4px;font-weight:700;color:#ffffff;white-space:nowrap;letter-spacing:0px;left:414.70000000000005px;width:200px;text-align:center;">1</div><div style="position:absolute;top:196.13px;height:11.18px;line-height:11.18px;font-size:8.6px;font-weight:400;color:#8d989f;white-space:nowrap;letter-spacing:-0.1px;left:531.2px;transform:scaleX(0.82);transform-origin:left center;">Gmail</div><div style="position:absolute;left:504px;top:210.70000000000002px;width:150px;height:18.9px;background:#f2f3f5;"></div><div style="position:absolute;left:504px;top:210.70000000000002px;width:150px;height:1.2px;background:#e2e6e9;"></div><div style="position:absolute;left:509.3px;top:215.70000000000002px;width:10.8px;height:9px;background:#2962f0;border-radius:2.2px"></div><div style="position:absolute;top:215.93px;height:9.62px;line-height:9.62px;font-size:7.4px;font-weight:700;color:#ffffff;white-space:nowrap;letter-spacing:0px;left:414.70000000000005px;width:200px;text-align:center;">2</div><div style="position:absolute;top:215.03px;height:11.18px;line-height:11.18px;font-size:8.6px;font-weight:400;color:#8d989f;white-space:nowrap;letter-spacing:-0.1px;left:531.2px;transform:scaleX(0.82);transform-origin:left center;">Google Docs</div><div style="position:absolute;left:504px;top:229.60000000000002px;width:150px;height:18.9px;background:#ffffff;"></div><div style="position:absolute;left:504px;top:229.60000000000002px;width:150px;height:1.2px;background:#e2e6e9;"></div><div style="position:absolute;left:509.3px;top:234.60000000000002px;width:10.8px;height:9px;background:#21b11c;border-radius:2.2px"></div><div style="position:absolute;top:234.83px;height:9.62px;line-height:9.62px;font-size:7.4px;font-weight:700;color:#ffffff;white-space:nowrap;letter-spacing:0px;left:414.70000000000005px;width:200px;text-align:center;">3</div><div style="position:absolute;top:233.93px;height:11.18px;line-height:11.18px;font-size:8.6px;font-weight:400;color:#8d989f;white-space:nowrap;letter-spacing:-0.1px;left:531.2px;transform:scaleX(0.82);transform-origin:left center;">Google Calendar</div><div style="position:absolute;left:504px;top:248.5px;width:150px;height:18.9px;background:#f2f3f5;"></div><div style="position:absolute;left:504px;top:248.5px;width:150px;height:1.2px;background:#e2e6e9;"></div><div style="position:absolute;left:509.3px;top:253.5px;width:10.8px;height:9px;background:#ff9b1e;border-radius:2.2px"></div><div style="position:absolute;top:253.73px;height:9.62px;line-height:9.62px;font-size:7.4px;font-weight:700;color:#ffffff;white-space:nowrap;letter-spacing:0px;left:414.70000000000005px;width:200px;text-align:center;">4</div><div style="position:absolute;top:252.83px;height:11.18px;line-height:11.18px;font-size:8.6px;font-weight:400;color:#8d989f;white-space:nowrap;letter-spacing:-0.1px;left:531.2px;transform:scaleX(0.82);transform-origin:left center;">Google Drive</div><div style="position:absolute;left:504px;top:267.4px;width:150px;height:18.9px;background:#ffffff;"></div><div style="position:absolute;left:504px;top:267.4px;width:150px;height:1.2px;background:#e2e6e9;"></div><div style="position:absolute;left:509.3px;top:272.4px;width:10.8px;height:9px;background:#1ea4e0;border-radius:2.2px"></div><div style="position:absolute;top:272.63px;height:9.62px;line-height:9.62px;font-size:7.4px;font-weight:700;color:#ffffff;white-space:nowrap;letter-spacing:0px;left:414.70000000000005px;width:200px;text-align:center;">5</div><div style="position:absolute;top:271.73px;height:11.18px;line-height:11.18px;font-size:8.6px;font-weight:400;color:#8d989f;white-space:nowrap;letter-spacing:-0.1px;left:531.2px;transform:scaleX(0.82);transform-origin:left center;">Google Hangouts</div><div style="position:absolute;left:504px;top:286.3px;width:150px;height:18.9px;background:#f2f3f5;"></div><div style="position:absolute;left:504px;top:286.3px;width:150px;height:1.2px;background:#e2e6e9;"></div><div style="position:absolute;left:509.3px;top:291.3px;width:10.8px;height:9px;background:#f2467e;border-radius:2.2px"></div><div style="position:absolute;top:291.53px;height:9.62px;line-height:9.62px;font-size:7.4px;font-weight:700;color:#ffffff;white-space:nowrap;letter-spacing:0px;left:414.70000000000005px;width:200px;text-align:center;">6</div><div style="position:absolute;top:290.63px;height:11.18px;line-height:11.18px;font-size:8.6px;font-weight:400;color:#8d989f;white-space:nowrap;letter-spacing:-0.1px;left:531.2px;transform:scaleX(0.82);transform-origin:left center;">Google Contacts</div><div style="position:absolute;left:504px;top:305.2px;width:150px;height:18.9px;background:#ffffff;"></div><div style="position:absolute;left:504px;top:305.2px;width:150px;height:1.2px;background:#e2e6e9;"></div><div style="position:absolute;left:509.3px;top:310.2px;width:10.8px;height:9px;background:#76c71d;border-radius:2.2px"></div><div style="position:absolute;top:310.43px;height:9.62px;line-height:9.62px;font-size:7.4px;font-weight:700;color:#ffffff;white-space:nowrap;letter-spacing:0px;left:414.70000000000005px;width:200px;text-align:center;">7</div><div style="position:absolute;top:309.53px;height:11.18px;line-height:11.18px;font-size:8.6px;font-weight:400;color:#8d989f;white-space:nowrap;letter-spacing:-0.1px;left:531.2px;transform:scaleX(0.82);transform-origin:left center;">Google Maps</div><div style="position:absolute;left:504px;top:324.1px;width:150px;height:18.9px;background:#f2f3f5;"></div><div style="position:absolute;left:504px;top:324.1px;width:150px;height:1.2px;background:#e2e6e9;"></div><div style="position:absolute;left:509.3px;top:329.1px;width:10.8px;height:9px;background:#b01fcc;border-radius:2.2px"></div><div style="position:absolute;top:329.33px;height:9.62px;line-height:9.62px;font-size:7.4px;font-weight:700;color:#ffffff;white-space:nowrap;letter-spacing:0px;left:414.70000000000005px;width:200px;text-align:center;">8</div><div style="position:absolute;top:328.43px;height:11.18px;line-height:11.18px;font-size:8.6px;font-weight:400;color:#8d989f;white-space:nowrap;letter-spacing:-0.1px;left:531.2px;transform:scaleX(0.82);transform-origin:left center;">Google Photos</div><div style="position:absolute;left:525.0px;top:192.5px;width:1px;height:169.1px;background:rgba(0,0,0,0.02);"></div><div style="position:absolute;left:618.7px;top:192.5px;width:1px;height:169.1px;background:rgba(0,0,0,0.015);"></div><div style="position:absolute;left:504px;top:342.0px;width:150px;height:2px;background:#dbe0e4;"></div><div style="position:absolute;left:504px;top:344.0px;width:150px;height:19px;background:#ffffff;"></div><div style="position:absolute;left:509.2px;top:348.5px;width:10.9px;height:9.4px;background:#5c0a91;border-radius:2.4px"></div><div style="position:absolute;top:348.23px;height:10.92px;line-height:10.92px;font-size:8.4px;font-weight:700;color:#37464e;white-space:nowrap;letter-spacing:0px;left:531.3px;transform:scaleX(0.84);transform-origin:left center;">Total</div><div style="position:absolute;left:504px;top:363px;width:150px;height:3px;background:#eef0f2;"></div><div style="position:absolute;left:504px;top:366px;width:150px;height:13.5px;background:#ffffff;"></div><div style="position:absolute;top:369.12px;height:9.23px;line-height:9.23px;font-size:7.1px;font-weight:400;color:#59626a;white-space:nowrap;letter-spacing:-0.3px;left:510px;transform:scaleX(0.972);transform-origin:left center;">2019-08-06 09:45 - 2019-08-07 09:45</div><svg style="position:absolute;left:0;top:0" width="640" height="480" viewBox="0 0 640 480"><defs><linearGradient id="g1" x1="0" y1="0" x2="1" y2="1"><stop offset="0" stop-color="#2d73b2"/><stop offset="1" stop-color="#3f5fcf"/></linearGradient><linearGradient id="g2" x1="0" y1="0" x2="1" y2="1"><stop offset="0" stop-color="#a69100"/><stop offset="1" stop-color="#c6df00"/></linearGradient><linearGradient id="g3" x1="0" y1="1" x2="1" y2="0"><stop offset="0" stop-color="#b650b9"/><stop offset="1" stop-color="#8d3ea5"/></linearGradient><linearGradient id="g4" x1="0" y1="0" x2="1" y2="1"><stop offset="0" stop-color="#1f78f0"/><stop offset="1" stop-color="#3a5cf0"/></linearGradient><linearGradient id="g5" x1="0" y1="0" x2="1" y2="1"><stop offset="0" stop-color="#1854c8"/><stop offset="1" stop-color="#0f44b0"/></linearGradient><linearGradient id="g6" x1="0" y1="0" x2="1" y2="1"><stop offset="0" stop-color="#a69100"/><stop offset="1" stop-color="#c6df00"/></linearGradient><linearGradient id="g7" x1="0" y1="1" x2="1" y2="0"><stop offset="0" stop-color="#b650b9"/><stop offset="1" stop-color="#8d3ea5"/></linearGradient></defs><clipPath id="cl"><rect x="-10" y="408.3" width="329" height="80"/><rect x="326" y="408.3" width="330" height="80"/></clipPath><g clip-path="url(#cl)"><path d="M11.50 413.95 A37.75 37.75 0 0 1 48.68 445.14 L28.93 448.63 A17.7 17.7 0 0 0 11.50 434.00 Z" fill="url(#g1)" stroke="#fff" stroke-width="1.3" stroke-linejoin="miter"/><path d="M48.68 445.14 A37.75 37.75 0 0 1 48.79 457.61 L28.98 454.47 A17.7 17.7 0 0 0 28.93 448.63 Z" fill="#e9779c" stroke="#fff" stroke-width="1.3" stroke-linejoin="miter"/><path d="M48.79 457.61 A37.75 37.75 0 0 1 45.14 468.84 L27.27 459.74 A17.7 17.7 0 0 0 28.98 454.47 Z" fill="#69c91b" stroke="#fff" stroke-width="1.3" stroke-linejoin="miter"/><path d="M45.14 468.84 A37.75 37.75 0 0 1 37.25 479.31 L23.57 464.64 A17.7 17.7 0 0 0 27.27 459.74 Z" fill="#ff4584" stroke="#fff" stroke-width="1.3" stroke-linejoin="miter"/><path d="M37.25 479.31 A37.75 37.75 0 0 1 27.45 485.91 L18.98 467.74 A17.7 17.7 0 0 0 23.57 464.64 Z" fill="#5a0996" stroke="#fff" stroke-width="1.3" stroke-linejoin="miter"/><path d="M27.45 485.91 A37.75 37.75 0 0 1 17.41 488.99 L14.27 469.18 A17.7 17.7 0 0 0 18.98 467.74 Z" fill="#21b5ad" stroke="#fff" stroke-width="1.3" stroke-linejoin="miter"/><path d="M17.41 488.99 A37.75 37.75 0 0 1 6.90 489.17 L9.34 469.27 A17.7 17.7 0 0 0 14.27 469.18 Z" fill="#0f8878" stroke="#fff" stroke-width="1.3" stroke-linejoin="miter"/><path d="M6.90 489.17 A37.75 37.75 0 0 1 -2.64 486.70 L4.87 468.11 A17.7 17.7 0 0 0 9.34 469.27 Z" fill="#e6861f" stroke="#fff" stroke-width="1.3" stroke-linejoin="miter"/><path d="M-2.64 486.70 A37.75 37.75 0 0 1 -10.15 482.62 L1.35 466.20 A17.7 17.7 0 0 0 4.87 468.11 Z" fill="#3b8fee" stroke="#fff" stroke-width="1.3" stroke-linejoin="miter"/><path d="M-10.15 482.62 A37.75 37.75 0 0 1 -16.99 476.47 L-1.86 463.31 A17.7 17.7 0 0 0 1.35 466.20 Z" fill="#1c8f8a" stroke="#fff" stroke-width="1.3" stroke-linejoin="miter"/><path d="M-16.99 476.47 A37.75 37.75 0 0 1 -22.14 468.84 L-4.27 459.74 A17.7 17.7 0 0 0 -1.86 463.31 Z" fill="#b5a032" stroke="#fff" stroke-width="1.3" stroke-linejoin="miter"/><path d="M-22.14 468.84 A37.75 37.75 0 0 1 -25.28 460.19 L-5.75 455.68 A17.7 17.7 0 0 0 -4.27 459.74 Z" fill="#9a36b0" stroke="#fff" stroke-width="1.3" stroke-linejoin="miter"/><path d="M-25.28 460.19 A37.75 37.75 0 0 1 -26.24 451.04 L-6.20 451.39 A17.7 17.7 0 0 0 -5.75 455.68 Z" fill="#d85a20" stroke="#fff" stroke-width="1.3" stroke-linejoin="miter"/><path d="M-26.24 451.04 A37.75 37.75 0 0 1 -24.96 441.93 L-5.60 447.12 A17.7 17.7 0 0 0 -6.20 451.39 Z" fill="#2aa0e6" stroke="#fff" stroke-width="1.3" stroke-linejoin="miter"/><path d="M-24.96 441.93 A37.75 37.75 0 0 1 -21.52 433.40 L-3.98 443.12 A17.7 17.7 0 0 0 -5.60 447.12 Z" fill="#6f8f30" stroke="#fff" stroke-width="1.3" stroke-linejoin="miter"/><path d="M-21.52 433.40 A37.75 37.75 0 0 1 -16.11 425.95 L-1.44 439.63 A17.7 17.7 0 0 0 -3.98 443.12 Z" fill="#9a36b0" stroke="#fff" stroke-width="1.3" stroke-linejoin="miter"/><path d="M-16.11 425.95 A37.75 37.75 0 0 1 -10.15 420.78 L1.35 437.20 A17.7 17.7 0 0 0 -1.44 439.63 Z" fill="#d85a20" stroke="#fff" stroke-width="1.3" stroke-linejoin="miter"/><path d="M-10.15 420.78 A37.75 37.75 0 0 1 -4.45 417.49 L4.02 435.66 A17.7 17.7 0 0 0 1.35 437.20 Z" fill="#3a78f0" stroke="#fff" stroke-width="1.3" stroke-linejoin="miter"/><path d="M-4.45 417.49 A37.75 37.75 0 0 1 4.30 414.64 L8.12 434.33 A17.7 17.7 0 0 0 4.02 435.66 Z" fill="#1a56c2" stroke="#fff" stroke-width="1.3" stroke-linejoin="miter"/><path d="M4.30 414.64 A37.75 37.75 0 0 1 11.50 413.95 L11.50 434.00 A17.7 17.7 0 0 0 8.12 434.33 Z" fill="#20b2e6" stroke="#fff" stroke-width="1.3" stroke-linejoin="miter"/><path d="M97.60 413.95 A37.75 37.75 0 1 1 93.00 489.17 L95.44 469.27 A17.7 17.7 0 1 0 97.60 434.00 Z" fill="url(#g2)" stroke="#fff" stroke-width="1.3" stroke-linejoin="miter"/><path d="M93.00 489.17 A37.75 37.75 0 0 1 97.60 413.95 L97.60 434.00 A17.7 17.7 0 0 0 95.44 469.27 Z" fill="url(#g3)" stroke="#fff" stroke-width="1.3" stroke-linejoin="miter"/><path d="M547.70 414.60 A37.75 37.75 0 0 1 585.45 452.35 L565.40 452.35 A17.7 17.7 0 0 0 547.70 434.65 Z" fill="url(#g4)" stroke="#fff" stroke-width="1.3" stroke-linejoin="miter"/><path d="M585.45 452.35 A37.75 37.75 0 0 1 566.58 485.04 L556.55 467.68 A17.7 17.7 0 0 0 565.40 452.35 Z" fill="url(#g5)" stroke="#fff" stroke-width="1.3" stroke-linejoin="miter"/><path d="M566.58 485.04 A37.75 37.75 0 0 1 558.11 488.64 L552.58 469.36 A17.7 17.7 0 0 0 556.55 467.68 Z" fill="#ff3a8c" stroke="#fff" stroke-width="1.3" stroke-linejoin="miter"/><path d="M558.11 488.64 A37.75 37.75 0 0 1 549.02 490.08 L548.32 470.04 A17.7 17.7 0 0 0 552.58 469.36 Z" fill="#cc4638" stroke="#fff" stroke-width="1.3" stroke-linejoin="miter"/><path d="M549.02 490.08 A37.75 37.75 0 0 1 539.85 489.28 L544.02 469.66 A17.7 17.7 0 0 0 548.32 470.04 Z" fill="#b0389e" stroke="#fff" stroke-width="1.3" stroke-linejoin="miter"/><path d="M539.85 489.28 A37.75 37.75 0 0 1 531.75 486.56 L540.22 468.39 A17.7 17.7 0 0 0 544.02 469.66 Z" fill="#f04e0c" stroke="#fff" stroke-width="1.3" stroke-linejoin="miter"/><path d="M531.75 486.56 A37.75 37.75 0 0 1 524.98 482.50 L537.05 466.49 A17.7 17.7 0 0 0 540.22 468.39 Z" fill="#1db51d" stroke="#fff" stroke-width="1.3" stroke-linejoin="miter"/><path d="M524.98 482.50 A37.75 37.75 0 0 1 519.21 477.12 L534.34 463.96 A17.7 17.7 0 0 0 537.05 466.49 Z" fill="#ff9c1b" stroke="#fff" stroke-width="1.3" stroke-linejoin="miter"/><path d="M519.21 477.12 A37.75 37.75 0 0 1 514.68 470.65 L532.22 460.93 A17.7 17.7 0 0 0 534.34 463.96 Z" fill="#0d8574" stroke="#fff" stroke-width="1.3" stroke-linejoin="miter"/><path d="M514.68 470.65 A37.75 37.75 0 0 1 511.60 463.39 L530.77 457.52 A17.7 17.7 0 0 0 532.22 460.93 Z" fill="#2b98f2" stroke="#fff" stroke-width="1.3" stroke-linejoin="miter"/><path d="M511.60 463.39 A37.75 37.75 0 0 1 510.16 456.30 L530.10 454.20 A17.7 17.7 0 0 0 530.77 457.52 Z" fill="#c05a18" stroke="#fff" stroke-width="1.3" stroke-linejoin="miter"/><path d="M510.16 456.30 A37.75 37.75 0 0 1 510.09 449.06 L530.07 450.81 A17.7 17.7 0 0 0 530.10 454.20 Z" fill="#22ada0" stroke="#fff" stroke-width="1.3" stroke-linejoin="miter"/><path d="M510.09 449.06 A37.75 37.75 0 0 1 511.41 441.94 L530.69 447.47 A17.7 17.7 0 0 0 530.07 450.81 Z" fill="#86c61c" stroke="#fff" stroke-width="1.3" stroke-linejoin="miter"/><path d="M511.41 441.94 A37.75 37.75 0 0 1 514.06 435.21 L531.93 444.31 A17.7 17.7 0 0 0 530.69 447.47 Z" fill="#9606b4" stroke="#fff" stroke-width="1.3" stroke-linejoin="miter"/><path d="M514.06 435.21 A37.75 37.75 0 0 1 517.95 429.11 L533.75 441.45 A17.7 17.7 0 0 0 531.93 444.31 Z" fill="#48088a" stroke="#fff" stroke-width="1.3" stroke-linejoin="miter"/><path d="M517.95 429.11 A37.75 37.75 0 0 1 522.93 423.86 L536.09 438.99 A17.7 17.7 0 0 0 533.75 441.45 Z" fill="#ef6aa0" stroke="#fff" stroke-width="1.3" stroke-linejoin="miter"/><path d="M522.93 423.86 A37.75 37.75 0 0 1 528.83 419.66 L538.85 437.02 A17.7 17.7 0 0 0 536.09 438.99 Z" fill="#d69d33" stroke="#fff" stroke-width="1.3" stroke-linejoin="miter"/><path d="M528.83 419.66 A37.75 37.75 0 0 1 534.79 416.88 L541.65 435.72 A17.7 17.7 0 0 0 538.85 437.02 Z" fill="#7b4520" stroke="#fff" stroke-width="1.3" stroke-linejoin="miter"/><path d="M534.79 416.88 A37.75 37.75 0 0 1 541.14 415.17 L544.63 434.92 A17.7 17.7 0 0 0 541.65 435.72 Z" fill="#3874b6" stroke="#fff" stroke-width="1.3" stroke-linejoin="miter"/><path d="M541.14 415.17 A37.75 37.75 0 0 1 547.70 414.60 L547.70 434.65 A17.7 17.7 0 0 0 544.63 434.92 Z" fill="#1eb4e0" stroke="#fff" stroke-width="1.3" stroke-linejoin="miter"/><path d="M633.50 414.60 A37.75 37.75 0 1 1 626.94 489.53 L630.43 469.78 A17.7 17.7 0 1 0 633.50 434.65 Z" fill="url(#g6)" stroke="#fff" stroke-width="1.3" stroke-linejoin="miter"/><path d="M626.94 489.53 A37.75 37.75 0 0 1 633.50 414.60 L633.50 434.65 A17.7 17.7 0 0 0 630.43 469.78 Z" fill="url(#g7)" stroke="#fff" stroke-width="1.3" stroke-linejoin="miter"/></g></svg>
</body></html>
